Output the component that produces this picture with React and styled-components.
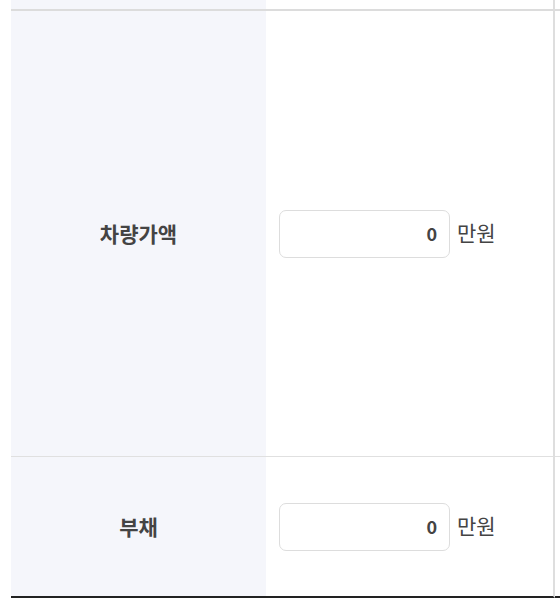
import React, { useState } from 'react'
import styled, { createGlobalStyle } from 'styled-components'

const GlobalStyle = createGlobalStyle`
    html, body {
        margin: 0;
        padding: 0;
        background: #fff;
        overflow: hidden;
        font-family: "Noto Sans CJK KR", "Noto Sans", sans-serif;
    }
`

const rows = [
    { key: 'car', label: '차량가액', height: 445 },
    { key: 'debt', label: '부채', height: 139 },
]

function App() {
    const [values, setValues] = useState({ car: '0', debt: '0' })

    const change = (key) => (e) => setValues({ ...values, [key]: e.target.value })

    return (
        <>
            <GlobalStyle />
            <Page>
                <Table>
                    <LabelCell $height={9} $top />
                    <ValueCell $height={9} $top />
                    <RestCell $height={9} $top />
                    {rows.map((row, i) => (
                        <React.Fragment key={row.key}>
                            <LabelCell $height={row.height} $last={i === rows.length - 1}>
                                {row.label}
                            </LabelCell>
                            <ValueCell $height={row.height} $last={i === rows.length - 1}>
                                <AmountInput value={values[row.key]} onChange={change(row.key)} />
                                <Unit>만원</Unit>
                            </ValueCell>
                            <RestCell $height={row.height} $last={i === rows.length - 1} />
                        </React.Fragment>
                    ))}
                </Table>
            </Page>
        </>
    )
}

export default App

const Page = styled.div`
    padding-left: 11px;
    width: 560px;
    box-sizing: border-box;
`

const Table = styled.div`
    display: grid;
    grid-template-columns: 255px 289px 1fr;
`

const Cell = styled.div`
    box-sizing: content-box;
    height: ${(p) => p.$height}px;
    border-bottom: ${(p) => (p.$top ? '2px solid #dcdcdc' : p.$last ? '2px solid #222' : '1px solid #e0e0e0')};
`

const LabelCell = styled(Cell)`
    background-color: #f5f6fb;
    display: flex;
    align-items: center;
    justify-content: center;
    font-size: 21px;
    font-weight: 700;
    color: #444;
    padding-bottom: 2px;
    box-sizing: border-box;
    height: ${(p) => p.$height + (p.$top ? 2 : p.$last ? 2 : 1)}px;
`

const ValueCell = styled(Cell)`
    background-color: #fff;
    border-right: 2px solid #dedede;
    display: flex;
    align-items: center;
    padding-left: 13px;
    box-sizing: border-box;
    height: ${(p) => p.$height + (p.$top ? 2 : p.$last ? 2 : 1)}px;
`

const RestCell = styled(Cell)`
    background-color: #fff;
`

const AmountInput = styled.input`
    width: 171px;
    height: 48px;
    box-sizing: border-box;
    border: 1px solid #dddddd;
    border-radius: 7px;
    padding: 0 12px 2px;
    text-align: right;
    font-family: "Noto Sans CJK KR", "Noto Sans", sans-serif;
    font-size: 18px;
    font-weight: 700;
    color: #444;
    outline: none;
    background: #fff;
`

const Unit = styled.span`
    margin-left: 7px;
    margin-bottom: 4px;
    font-size: 21px;
    color: #444;
`
